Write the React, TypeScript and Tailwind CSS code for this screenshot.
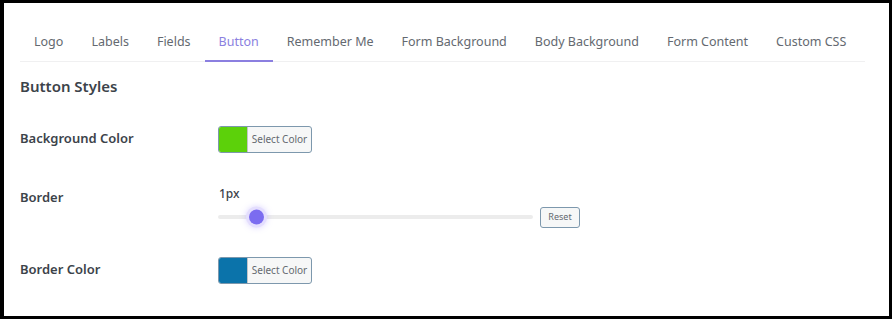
import React from "react";

const tabs = [
  "Logo",
  "Labels",
  "Fields",
  "Button",
  "Remember Me",
  "Form Background",
  "Body Background",
  "Form Content",
  "Custom CSS",
];

const ColorPicker = ({ color }: { color: string }) => (
  <button className="flex h-[27px] w-[94px] items-stretch overflow-hidden rounded-[3px] border border-[#7d98ad] bg-[#f6f7f7] font-normal">
    <span className="w-[28px]" style={{ background: color }} />
    <span className="flex flex-1 items-center justify-center border-l border-[#c3c4c7] text-[10px] text-[#646970]">
      Select Color
    </span>
  </button>
);

export default function App() {
  return (
    <div className="h-[319px] w-[892px] bg-black pt-[3px] pr-[3px] pb-[3px] pl-[4px] font-['Noto_Sans',sans-serif]">
      <div className="h-full w-full bg-white px-4">
        {/* tabs */}
        <div className="mr-[8px] flex border-b border-[#f0f0f1] pt-[29px]">
          {tabs.map((t) => (
            <div
              key={t}
              className={
                t === "Button"
                  ? "-mb-px border-b-2 border-[#8b7fe0] px-[14px] pb-[8px] text-[12.5px] leading-[20px] whitespace-nowrap text-[#8b7fe0]"
                  : "px-[14px] pb-[9px] text-[12.5px] leading-[20px] whitespace-nowrap text-[#646970]"
              }
            >
              {t}
            </div>
          ))}
        </div>

        <h2 className="mt-[13px] text-[15px] font-semibold text-[#3c434a]">Button Styles</h2>

        <div className="mt-[28px] grid grid-cols-[198px_1fr] items-center text-[13px] font-semibold text-[#3c434a]">
          <div>Background Color</div>
          <ColorPicker color="#5cd10a" />
        </div>

        <div className="mt-[32px] grid grid-cols-[198px_1fr] items-center">
          <div className="pb-[16px] text-[13px] font-semibold text-[#3c434a]">Border</div>
          <div>
            <div className="pl-[1px] text-[12px] font-medium text-[#3c434a]">1px</div>
            <div className="mt-[4px] flex items-center">
              <div className="relative h-[4px] w-[315px] rounded-full bg-[#ececec]">
                <span className="absolute top-1/2 left-[31px] h-[15px] w-[15px] -translate-y-1/2 rounded-full bg-[#7b6cf0] ring-[3px] ring-[#e4defe] shadow-[0_0_6px_3px_rgba(150,130,255,0.35)]" />
              </div>
              <button className="ml-[7px] h-[21px] w-[40px] rounded-[3px] border border-[#7d98ad] bg-[#f6f7f7] text-[9px] text-[#646970]">
                Reset
              </button>
            </div>
          </div>
        </div>

        <div className="mt-[29px] grid grid-cols-[198px_1fr] items-center text-[13px] font-semibold text-[#3c434a]">
          <div>Border Color</div>
          <ColorPicker color="#0b73aa" />
        </div>
      </div>
    </div>
  );
}
